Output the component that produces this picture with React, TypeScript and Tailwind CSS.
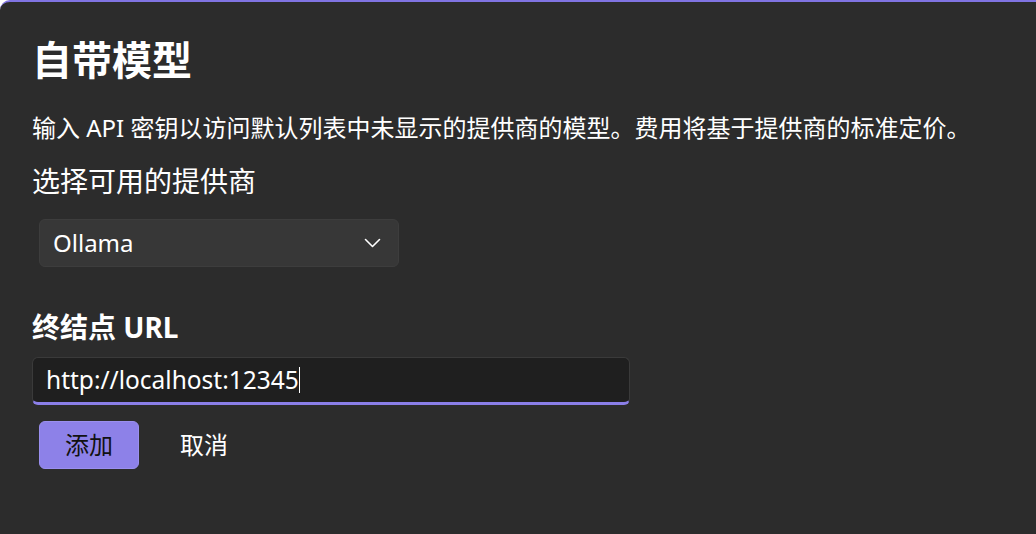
const font = { fontFamily: '"Noto Sans", "Noto Sans CJK SC", sans-serif' };

function Chevron() {
  return (
    <svg width="17" height="10" viewBox="0 0 17 10" fill="none">
      <path d="M1.5 1.5 8.5 8.5 15.5 1.5" stroke="white" strokeWidth="1.6" strokeLinecap="round" strokeLinejoin="round" />
    </svg>
  );
}

export default function App() {
  return (
    <div
      className="min-h-screen bg-[#2c2c2c] text-white rounded-tl-[10px] border-t-2 border-[#8074e2] pl-8 pt-[34px]"
      style={font}
    >
      <h1 className="text-[40px] leading-[48px] font-bold">自带模型</h1>

      <p className="mt-[28px] text-[24px] leading-[32px]">
        输入 API 密钥以访问默认列表中未显示的提供商的模型。费用将基于提供商的标准定价。
      </p>

      <div className="mt-[19px] text-[28px] leading-[36px]">选择可用的提供商</div>

      {/* provider select */}
      <div className="mt-[20px] ml-[7px] w-[360px] h-12 rounded-md bg-[#373737] border border-[#3d3d3d] flex items-center justify-between pl-[13px] pr-[17px]">
        <span className="text-[24px]">Ollama</span>
        <Chevron />
      </div>

      <div className="mt-[42px] text-[28px] leading-[36px] font-bold">终结点 URL</div>

      {/* endpoint input, focused */}
      <div className="mt-3 w-[598px] h-12 rounded-md bg-[#1f1f1f] border border-[#3a3a3a] border-b-[3px] border-b-[#8b7fe8] flex items-center pl-[13px]">
        <span className="text-[24.5px]">http://localhost:12345</span>
        <span className="w-px h-[26px] bg-white" />
      </div>

      <div className="mt-4 flex items-center">
        <button className="ml-[7px] w-[100px] h-12 rounded-md bg-[#8d81e8] border border-[#9a8fee] text-[#111] text-[24px]">
          添加
        </button>
        <button className="ml-[18px] w-[94px] h-12 rounded-md text-white text-[24px]">取消</button>
      </div>
    </div>
  );
}
